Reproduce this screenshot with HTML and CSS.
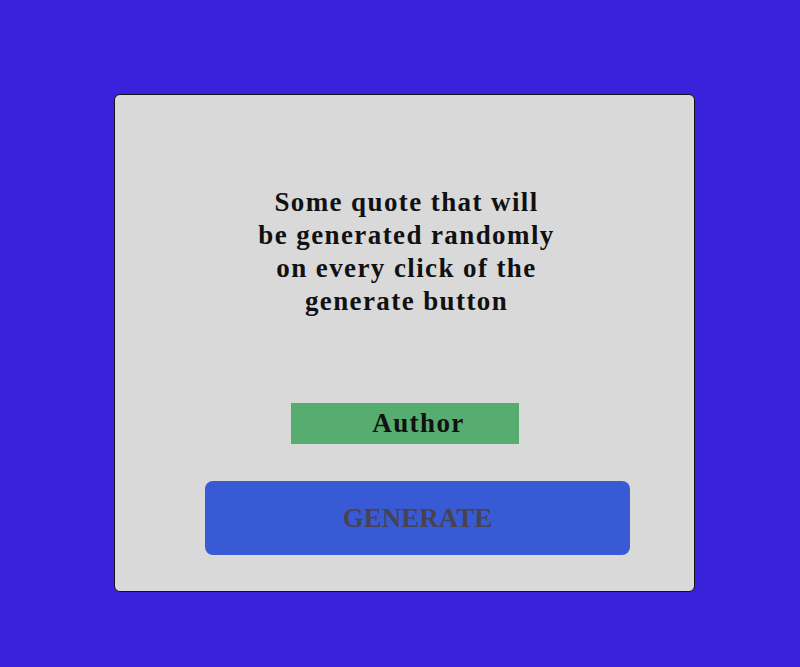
FILE: index.html
```html
<!DOCTYPE html>
<html>
<head>
<meta charset="utf-8">
<link rel="stylesheet" href="styles.css">
</head>
<body>
<main class="card">
  <p class="quote">Some quote that will be generated randomly on every click of the generate button</p>
  <div class="author">Author</div>
  <button class="generate">GENERATE</button>
</main>
</body>
</html>
```
FILE: styles.css
```css
html, body {
  margin: 0;
  padding: 0;
  height: 100%;
}
body {
  background: #3a22dd;
  font-family: "Liberation Serif", "DejaVu Serif", serif;
  display: flex;
  justify-content: center;
  padding-top: 94px;
  padding-left: 9px;
  box-sizing: border-box;
}
.card {
  width: 581px;
  height: 498px;
  box-sizing: border-box;
  background: #d9d9d9;
  border: 1.5px solid #111;
  border-radius: 6px;
  display: flex;
  flex-direction: column;
  align-items: center;
  padding-top: 91px;
}
.quote {
  margin: 0;
  width: 302px;
  text-align: center;
  font-size: 27px;
  font-weight: bold;
  letter-spacing: 1.4px;
  line-height: 33px;
  color: #111;
  padding-left: 4px;
}
.author {
  margin-top: 85px;
  width: 228px;
  height: 41px;
  background: #57ad6f;
  color: #111;
  font-size: 27px;
  font-weight: bold;
  letter-spacing: 1.4px;
  display: flex;
  align-items: center;
  justify-content: center;
  padding-left: 28px;
  box-sizing: border-box;
}
.generate {
  margin-top: 37px;
  margin-left: 26px;
  width: 425px;
  height: 74px;
  border: none;
  border-radius: 8px;
  background: #385bd5;
  color: #474350;
  font-family: inherit;
  font-size: 27px;
  font-weight: bold;
  letter-spacing: 0;
}
```
